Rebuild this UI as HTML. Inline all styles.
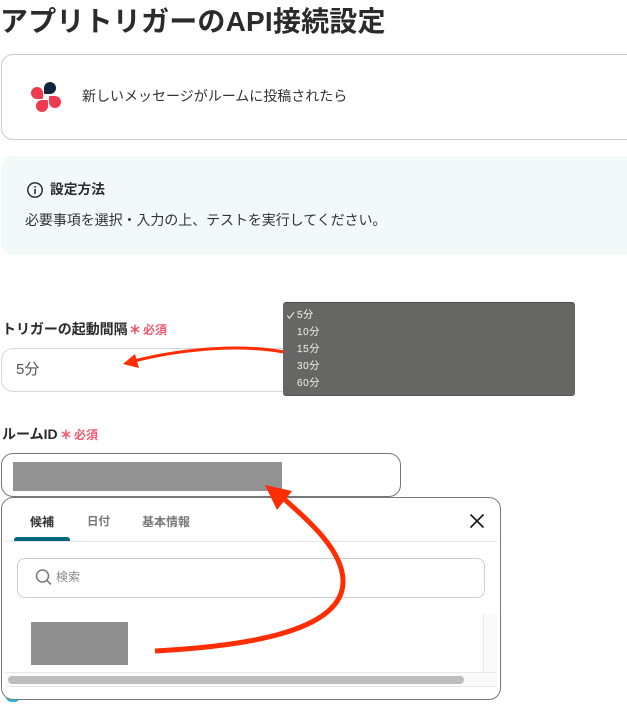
<!DOCTYPE html>
<html lang="ja"><head><meta charset="utf-8">
<style>
html,body{margin:0;padding:0;background:#fff}
body{width:627px;height:705px;position:relative;overflow:hidden;font-family:"Liberation Sans","Noto Sans CJK JP",sans-serif;color:#333}
.a{position:absolute;box-sizing:border-box}
.t{position:absolute;white-space:nowrap;line-height:20px}
.b{font-weight:700}
.req{color:#f4566f;font-weight:700;font-size:12px}
.d{position:absolute;width:12px;height:12px;border-radius:50%}
.m{position:absolute;white-space:nowrap;line-height:20px;left:297px;font-size:10px;letter-spacing:.6px;color:#dcdcdc;-webkit-text-stroke:.2px #dcdcdc}
</style></head><body>
<div class="t b" style="left:0;top:2px;font-size:28px;line-height:40px;letter-spacing:.2px;color:#2b2b2b">アプリトリガーのAPI接続設定</div>

<div class="a" style="left:1px;top:54px;width:640px;height:86px;border:1px solid #ccc;border-radius:12px"></div>
<div class="d" style="left:44px;top:82px;background:#12263f;border-bottom-left-radius:1px"></div>
<div class="d" style="left:31px;top:87px;background:#f03a4f;border-bottom-right-radius:1px"></div>
<div class="d" style="left:36px;top:100px;background:#f03a4f;border-top-right-radius:1px"></div>
<div class="d" style="left:49px;top:96px;background:#f03a4f;border-top-left-radius:1px"></div>
<div class="t" style="left:82px;top:86px;font-size:14px;color:#333">新しいメッセージがルームに投稿されたら</div>

<div class="a" style="left:1px;top:156px;width:640px;height:99px;background:#f1f9f9;border-radius:12px"></div>
<svg class="a" style="left:26px;top:181px" width="18" height="18" viewBox="0 0 18 18"><circle cx="9" cy="9" r="7.2" fill="none" stroke="#222" stroke-width="1.4"/><rect x="8.3" y="8" width="1.5" height="5" fill="#222"/><rect x="8.3" y="5" width="1.5" height="1.6" fill="#222"/></svg>
<div class="t b" style="left:50px;top:180px;font-size:13.75px;color:#2b2b2b">設定方法</div>
<div class="t" style="left:25px;top:210px;font-size:14px;letter-spacing:-.07px;color:#333">必要事項を選択・入力の上、テストを実行してください。</div>

<div class="t b" style="left:2px;top:319px;font-size:14px;letter-spacing:-.05px;color:#2b2b2b">トリガーの起動間隔</div>
<div class="t req" style="left:129px;top:320px;-webkit-text-stroke:.4px #f4566f">＊</div>
<div class="t req" style="left:143px;top:320px">必須</div>
<div class="a" style="left:1px;top:348px;width:420px;height:44px;border:1px solid #d3d7e0;border-radius:12px"></div>
<div class="t" style="left:16px;top:360px;font-size:15px;color:#555">5分</div>

<div class="t b" style="left:2px;top:424px;font-size:14px;color:#2b2b2b">ルームID</div>
<div class="t req" style="left:60px;top:425px;-webkit-text-stroke:.4px #f4566f">＊</div>
<div class="t req" style="left:74px;top:425px">必須</div>
<div class="a" style="left:1px;top:453px;width:400px;height:44px;border:1px solid #777;border-radius:12px"></div>
<div class="a" style="left:13px;top:462px;width:269px;height:29px;background:#929292"></div>

<div class="a" style="left:6px;top:690px;width:14px;height:12px;background:#2cb6e8;border-radius:0 0 5px 5px"></div>
<div class="a" style="left:1px;top:497px;width:500px;height:203px;background:#fff;border:1px solid #777;border-radius:12px"></div>
<div class="t b" style="left:30px;top:512px;font-size:12px;color:#333">候補</div>
<div class="t b" style="left:87px;top:512px;font-size:11.5px;color:#777">日付</div>
<div class="t b" style="left:142px;top:512px;font-size:12px;color:#777">基本情報</div>
<div class="a" style="left:14px;top:537px;width:56px;height:4px;background:#00697f;border-radius:3px 3px 0 0"></div>
<div class="a" style="left:5px;top:541px;width:492px;height:1px;background:#e6e6e6"></div>
<svg class="a" style="left:469px;top:513px" width="16" height="16" viewBox="0 0 16 16"><path d="M1.5 1.5L14.5 14.5M14.5 1.5L1.5 14.5" stroke="#1a1a1a" stroke-width="1.6" fill="none"/></svg>
<div class="a" style="left:17px;top:558px;width:468px;height:40px;border:1px solid #ccc;border-radius:8px"></div>
<svg class="a" style="left:34px;top:568px" width="18" height="18" viewBox="0 0 18 18"><circle cx="8.5" cy="8" r="6" fill="none" stroke="#777" stroke-width="1.5"/><path d="M12.8 12.3L17 16.5" stroke="#777" stroke-width="1.5"/></svg>
<div class="t" style="left:56px;top:567px;font-size:12px;color:#888">検索</div>
<div class="a" style="left:483px;top:614px;width:14px;height:58px;background:#fafafa;border-left:1px solid #e8e8e8"></div>
<div class="a" style="left:5px;top:672px;width:492px;height:15px;background:#fafafa;border-top:1px solid #e8e8e8;border-bottom:1px solid #e8e8e8"></div>
<div class="a" style="left:8px;top:676px;width:456px;height:8px;background:#bdbdbd;border-radius:4px"></div>
<div class="a" style="left:31px;top:622px;width:97px;height:43px;background:#8f8f8f"></div>

<div class="a" style="left:283px;top:302px;width:292px;height:94px;background:#666665;border-top:1px solid #4a4a4a;border-bottom:1px solid #555;border-radius:3px"></div>
<svg class="a" style="left:286px;top:311px" width="10" height="9" viewBox="0 0 10 9"><path d="M1.2 4.6L3.4 7.2L8 1.2" fill="none" stroke="#e4e4e4" stroke-width="1.2"/></svg>
<div class="m" style="top:306px">5分</div>
<div class="m" style="top:323px">10分</div>
<div class="m" style="top:340px">15分</div>
<div class="m" style="top:357px">30分</div>
<div class="m" style="top:374px">60分</div>

<svg class="a" style="left:0;top:0" width="627" height="705" viewBox="0 0 627 705">
<path d="M284 352C245 345 190 347 134 361" fill="none" stroke="#ff2d00" stroke-width="3"/>
<path d="M123 364L135 354L139 368Z" fill="#ff2d00"/>
<path d="M155 651C230 647 345 635 343 580C342 550 310 522 283 498" fill="none" stroke="#ff2d00" stroke-width="5"/>
<path d="M265 485L292 491L277 510Z" fill="#ff2d00"/>
</svg>
</body></html>
